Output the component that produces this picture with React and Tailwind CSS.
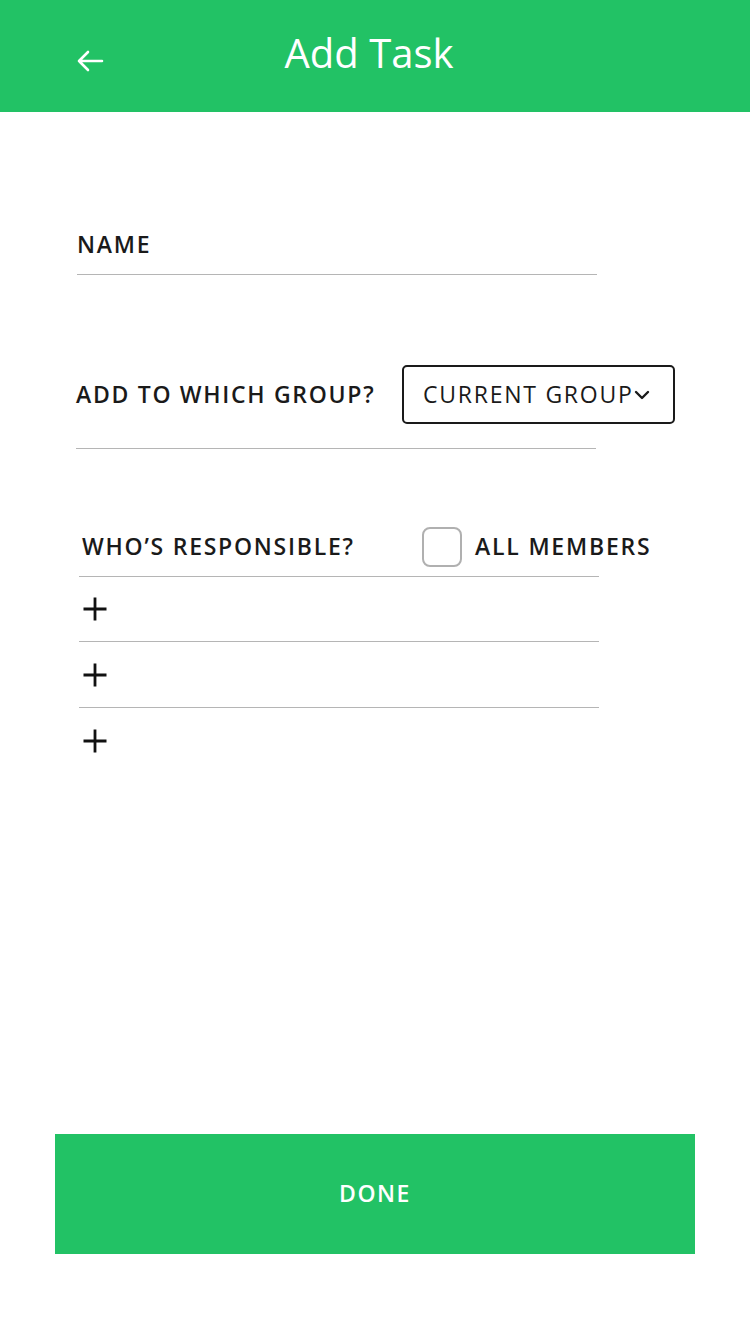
import React from "react";

function Plus() {
  return (
    <svg width="26" height="26" viewBox="0 0 26 26" className="block">
      <path d="M13 1.5V24.5M1.5 13H24.5" stroke="#111" strokeWidth="2.8" fill="none" />
    </svg>
  );
}

export default function App() {
  const font = { fontFamily: '"Open Sans", "Noto Sans", sans-serif' };
  return (
    <div className="w-[750px] h-[1334px] bg-white flex flex-col" style={font}>
      <header className="h-[112px] bg-[#22c265] grid grid-cols-[1fr_auto_1fr] items-center">
        <div className="pl-[76px] pt-[10px]">
          <svg width="28" height="24" viewBox="0 0 28 24" className="block">
            <path d="M26 12H3M12 3L3 12L12 21" stroke="white" strokeWidth="2.6" fill="none" strokeLinecap="round" strokeLinejoin="round" />
          </svg>
        </div>
        <h1 className="text-white text-[40px] leading-[48px] pb-[6px] pr-[12px]">Add Task</h1>
        <div />
      </header>

      <div className="pl-[77px] mt-[117px] w-[597px]">
        <div className="border-b border-[#b5b5b5] pb-[15px]">
          <div className="text-[#1a1a1a] text-[23px] leading-[30px] font-semibold tracking-[1.8px]">NAME</div>
        </div>
      </div>

      <div className="pl-[76px] mt-[90px]">
        <div className="flex items-center">
          <div className="text-[#1a1a1a] text-[23px] leading-[30px] font-semibold tracking-[1.7px] w-[326px] shrink-0 whitespace-nowrap pb-[2px]">ADD TO WHICH GROUP?</div>
          <div className="w-[273px] h-[59px] shrink-0 border-2 border-[#1a1a1a] rounded-[5px] flex items-center pl-[19px]">
            <span className="text-[#1a1a1a] text-[23px] leading-[30px] tracking-[1.75px] whitespace-nowrap pb-[2px]">CURRENT GROUP</span>
            <svg width="16" height="10" viewBox="0 0 16 10" className="mt-[1px] shrink-0">
              <path d="M2 2L8 8L14 2" stroke="#1a1a1a" strokeWidth="2.4" fill="none" strokeLinecap="round" strokeLinejoin="round" />
            </svg>
          </div>
        </div>
        <div className="w-[520px] border-b border-[#b5b5b5] mt-[24px]" />
      </div>

      <div className="pl-[79px] mt-[78px]">
        <div className="flex items-center h-[40px] pl-[3px]">
          <div className="text-[#1a1a1a] text-[23px] leading-[30px] font-semibold tracking-[1.75px] w-[340px] shrink-0 whitespace-nowrap pb-[2px]">WHO’S RESPONSIBLE?</div>
          <div className="w-[40px] h-[40px] border-2 border-[#b0b0b0] rounded-[8px] shrink-0" />
          <div className="ml-[13px] shrink-0 whitespace-nowrap text-[#1a1a1a] text-[23px] leading-[30px] font-semibold tracking-[1.8px] pb-[2px]">ALL MEMBERS</div>
        </div>
        <div className="w-[520px] mt-[9px] border-t border-[#b5b5b5]">
          <div className="h-[65px] flex items-center pl-[3px] border-b border-[#b5b5b5]"><Plus /></div>
          <div className="h-[66px] flex items-center pl-[3px] border-b border-[#b5b5b5]"><Plus /></div>
          <div className="h-[66px] flex items-center pl-[3px]"><Plus /></div>
        </div>
      </div>

      <div className="mt-auto mb-[80px] px-[55px]">
        <button className="w-[640px] h-[120px] bg-[#22c265] text-white text-[23px] font-semibold tracking-[1.5px] flex items-center justify-center pb-[2px]">
          DONE
        </button>
      </div>
    </div>
  );
}
